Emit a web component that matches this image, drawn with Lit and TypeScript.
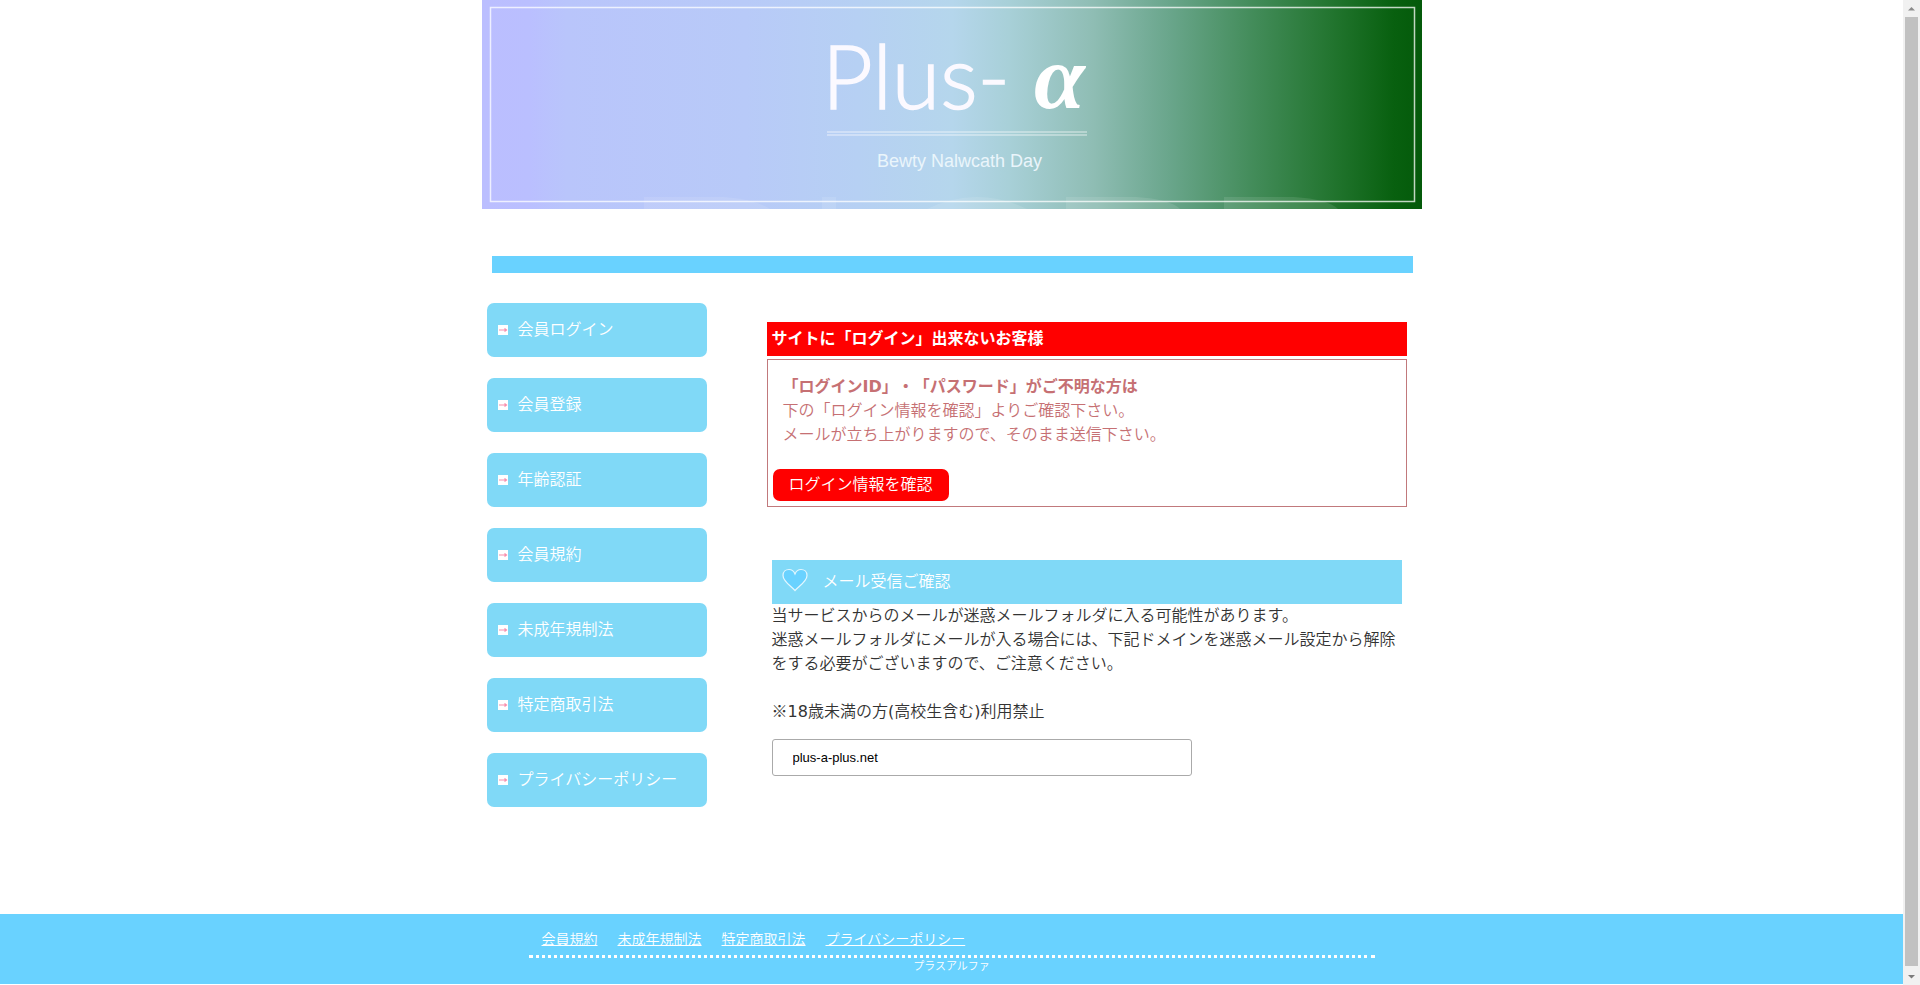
import { LitElement, html, css } from "lit";
import { customElement } from "lit/decorators.js";

const MENU = ["会員ログイン", "会員登録", "年齢認証", "会員規約", "未成年規制法", "特定商取引法", "プライバシーポリシー"];
const FOOTER_LINKS = ["会員規約", "未成年規制法", "特定商取引法", "プライバシーポリシー"];

@customElement("site-banner")
class SiteBanner extends LitElement {
  static styles = css`
    :host { display: block; }
    .art { display: block; width: 100%; height: auto; }
    .name { font: 300 88px Lato, sans-serif; fill: #fbf9ff; stroke: #fbf9ff; stroke-width: 1.5; }
    .alpha { font: italic 700 92px "Liberation Serif", serif; fill: #fff; }
    .tagline { font: 18px "Liberation Sans", Arial, sans-serif; fill: #eaf5fb; }
  `;
  render() {
    return html`
      <svg class="art" viewBox="0 0 940 209" role="img" aria-label="Plus-α">
        <defs>
          <linearGradient id="sky">
            <stop offset="0" stop-color="#bbbeff" />
            <stop offset="0.05" stop-color="#babfff" />
            <stop offset="0.09" stop-color="#b9c5fb" />
            <stop offset="0.28" stop-color="#b8caf8" />
            <stop offset="0.4" stop-color="#b6d0f3" />
            <stop offset="0.5" stop-color="#b5d6ec" />
            <stop offset="0.56" stop-color="#a8d0d8" />
            <stop offset="0.65" stop-color="#8fbdb4" />
            <stop offset="0.73" stop-color="#6aa68c" />
            <stop offset="0.82" stop-color="#438c5a" />
            <stop offset="0.91" stop-color="#20732c" />
            <stop offset="0.97" stop-color="#08600f" />
            <stop offset="1" stop-color="#045a0a" />
          </linearGradient>
        </defs>
        <rect width="940" height="209" fill="url(#sky)" />
        <g fill="#fff" opacity="0.1">
          <path d="M162 209v-12h80q30 2 46 12z" />
          <path d="M340 197h14v12h-14z" />
          <path d="M445 209q50-24 100 0z" />
          <path d="M584 209v-12h70q34 2 44 12z" />
          <path d="M742 209v-12h70q34 2 44 12z" />
        </g>
        <rect x="8.5" y="7.5" width="924" height="194" fill="none" stroke="#fff" stroke-width="1.5" opacity="0.75" />
        <text class="name" x="340" y="109">Plus-</text>
        <text class="alpha" x="552" y="108">α</text>
        <path d="M345 132h260M345 135h260" stroke="#fff" stroke-width="1.200" opacity="0.7" />
        <text class="tagline" x="395" y="167">Bewty Nalwcath Day</text>
      </svg>
    `;
  }
}

@customElement("side-menu")
class SideMenu extends LitElement {
  static styles = css`
    :host { display: block; }
    .list { display: flex; flex-direction: column; gap: 21px; margin: 0; padding: 0; list-style: none; }
    .link {
      display: flex; align-items: center; gap: 10px; box-sizing: border-box; height: 54px;
      padding: 0 11px; border-radius: 7px; background: #80d9f7; color: #fff;
      font-size: 16px; line-height: 24px; text-decoration: none;
    }
    .label { padding-bottom: 4px; }
    .mark { flex: none; width: 10px; height: 10px; }
  `;
  render() {
    return html`
      <nav>
        <ul class="list">
          ${MENU.map((text) => html`
            <li>
              <a class="link" href="#">
                <svg class="mark" viewBox="0 0 10 10" aria-hidden="true">
                  <rect width="10" height="10" fill="#fff" />
                  <path d="M1 5h7M6.500 3.500 8.500 5 6.500 6.500" fill="none" stroke="#f78fae" stroke-width="1.200" />
                </svg>
                <span class="label">${text}</span>
              </a>
            </li>`)}
        </ul>
      </nav>
    `;
  }
}

@customElement("page-scroller")
class PageScroller extends LitElement {
  static styles = css`
    :host {
      position: sticky; top: 0; display: flex; flex-direction: column; align-items: center;
      box-sizing: border-box; width: 17px; height: 100vh; background: #f1f1f1;
    }
    .arrow { width: 17px; height: 17px; }
    .thumb { flex: 1; width: 13px; margin-bottom: 2px; background: #c1c1c1; }
  `;
  render() {
    return html`
      <svg class="arrow" viewBox="0 0 17 17"><path d="M5 10.500h7L8.500 7z" fill="#8b8b8b" /></svg>
      <div class="thumb"></div>
      <svg class="arrow" viewBox="0 0 17 17"><path d="M5 7h7l-3.500 3.500z" fill="#7b7b7b" /></svg>
    `;
  }
}

@customElement("app-root")
class AppRoot extends LitElement {
  static styles = css`
    :host {
      display: flex; align-items: flex-start; background: #fff; color: #333;
      font-family: "Noto Sans CJK JP", sans-serif; font-size: 16px; line-height: 24px; font-weight: 350;
      text-spacing-trim: space-all;
    }
    .page { flex: 1; min-width: 0; }
    .container { max-width: 940px; margin: 0 auto; }
    .bar { height: 17px; margin: 47px 9px 30px 10px; background: #69d2ff; }
    .columns { display: flex; justify-content: space-between; gap: 20px; padding: 0 15px 0 5px; }
    .side { flex: 0 0 220px; }
    .main { flex: 0 1 640px; padding-top: 19px; }
    .latin { font-family: "DejaVu Sans", Verdana, sans-serif; line-height: 16px; }
    .notice .latin { font-weight: 400; }
    .alert-title {
      box-sizing: border-box; height: 34px; margin: 0 0 3px; padding: 3px 5px;
      background: #f00; color: #fff; font-size: 16px; line-height: 24px; font-weight: 700;
    }
    .alert-box { padding: 13px 5px 5px; border: 1px solid #c1797c; color: #c67073; }
    .alert-text { margin: 0; padding: 0 10px 24px; }
    .confirm {
      display: inline-block; box-sizing: border-box; height: 32px; padding: 2px 16px;
      border-radius: 7px; background: #f00; color: #fff; text-decoration: none; vertical-align: top;
    }
    .mail { margin: 53px 5px 0; }
    .mail-title {
      display: flex; align-items: center; gap: 15px; box-sizing: border-box; height: 44px; margin: 0;
      padding: 0 10px 4px; background: #80d9f7; color: #fff; font-size: 16px; line-height: 24px; font-weight: 350;
    }
    .heart { flex: none; width: 26px; height: 24px; }
    .text { margin: -2px 0 24px; }
    .notice { margin: 0 0 17px; }
    .domain {
      display: block; box-sizing: border-box; width: 420px; max-width: 100%; height: 37px; padding: 0 20px;
      border: 1px solid #aaa; border-radius: 3px; background: #fff; color: #000;
      font: 13px "Liberation Sans", Arial, sans-serif;
    }
    .footer { margin: 107px 0 1px; padding: 12px 0 11px; background: #69d2ff; color: #fff; }
    .footer-inner { max-width: 846px; margin: 0 auto; }
    .footer-links {
      display: flex; flex-wrap: wrap; gap: 20px; margin: 0; padding: 0 13px 5px; list-style: none;
      border-bottom: 3px dotted #fff; font-size: 14px;
    }
    .footer-link { color: #fff; text-decoration: underline; }
    .copy { margin: 0; font-size: 11px; line-height: 15px; text-align: center; }
  `;
  render() {
    return html`
      <div class="page">
        <div class="container">
          <site-banner></site-banner>
          <div class="bar"></div>
          <div class="columns">
            <side-menu class="side"></side-menu>
            <main class="main">
              <section>
                <h2 class="alert-title">サイトに「ログイン」出来ないお客様</h2>
                <div class="alert-box">
                  <p class="alert-text">
                    <strong>「ログイン<span class="latin">ID</span>」・「パスワード」がご不明な方は</strong><br />下の「ログイン情報を確認」よりご確認下さい。<br />メールが立ち上がりますので、そのまま送信下さい。
                  </p>
                  <a class="confirm" href="#">ログイン情報を確認</a>
                </div>
              </section>
              <section class="mail">
                <h2 class="mail-title">
                  <svg class="heart" viewBox="0 0 26 24" aria-hidden="true">
                    <path d="M13 22.500C9 18 1 13.500 1 7.500 1 3.500 4 1.500 7 1.500c3 0 5 2 6 4.500 1-2.500 3-4.500 6-4.500 3 0 6 2 6 6 0 6-8 10.500-12 15z" fill="#69d2ff" stroke="#e4f7fe" stroke-width="1.200" />
                  </svg>
                  メール受信ご確認
                </h2>
                <p class="text">当サービスからのメールが迷惑メールフォルダに入る可能性があります。<br />迷惑メールフォルダにメールが入る場合には、下記ドメインを迷惑メール設定から解除をする必要がございますので、ご注意ください。</p>
                <p class="notice">※<span class="latin">18</span>歳未満の方<span class="latin">(</span>高校生含む<span class="latin">)</span>利用禁止</p>
                <input class="domain" type="text" aria-label="ドメイン" readonly .value=${"plus-a-plus.net"} />
              </section>
            </main>
          </div>
        </div>
        <footer class="footer">
          <div class="footer-inner">
            <ul class="footer-links">
              ${FOOTER_LINKS.map((text) => html`<li><a class="footer-link" href="#">${text}</a></li>`)}
            </ul>
            <p class="copy">プラスアルファ</p>
          </div>
        </footer>
      </div>
      <page-scroller aria-hidden="true"></page-scroller>
    `;
  }
}
